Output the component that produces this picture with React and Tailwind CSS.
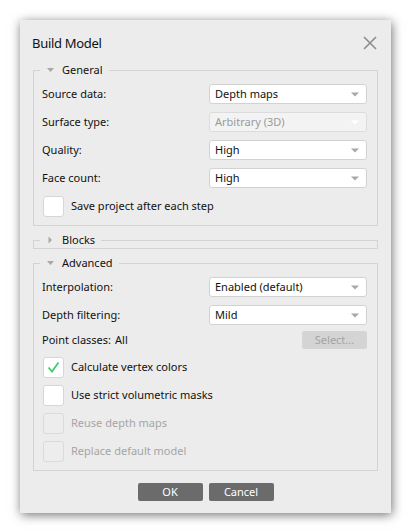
const font = { fontFamily: '"Noto Sans", "Open Sans", sans-serif' }

const Arrow = ({ color = '#a8a8a8' }) => (
    <svg width="8" height="5" viewBox="0 0 8 5" className="shrink-0 mr-[2px]">
        <path d="M0 0.5 H8 L4 4.5 Z" fill={color} />
    </svg>
)

const Combo = ({ value, disabled }) => (
    <div
        className={
            'w-[158px] h-5 flex items-center justify-between pl-[5px] pr-[5px] rounded-[3px] border ' +
            (disabled ? 'bg-[#f3f3f3] border-[#dcdcdc] text-[#9a9a9a]' : 'bg-white border-[#d2d2d2] text-[#111]')
        }
    >
        <span>{value}</span>
        <Arrow color={disabled ? '#ffffff' : '#a8a8a8'} />
    </div>
)

const Row = ({ label, value, disabled }) => (
    <div className="h-5 flex items-center">
        <div className="w-[167px] text-[#111]">{label}</div>
        <Combo value={value} disabled={disabled} />
    </div>
)

const Check = ({ label, checked, disabled }) => (
    <div className="h-5 flex items-center">
        <div
            className={
                'ml-px w-[21px] h-[21px] rounded-[3px] border flex items-center justify-center ' +
                (disabled ? 'bg-[#ededed] border-[#dadada]' : 'bg-white border-[#d6d6d6]')
            }
        >
            {checked && (
                <svg width="13" height="12" viewBox="0 0 13 12">
                    <path d="M1.5 6.5 L5 10.5 L11.5 1.5" fill="none" stroke="#3dcb6c" strokeWidth="1.8" />
                </svg>
            )}
        </div>
        <span className={'ml-[7px] ' + (disabled ? 'text-[#a5a5a5]' : 'text-[#111]')}>{label}</span>
    </div>
)

const Legend = ({ title, open }) => (
    <legend className="ml-[6px] pl-[7px] pr-[6px] h-4 flex items-center gap-[8px] text-[#111]">
        {open ? (
            <svg width="7" height="5" viewBox="0 0 7 5">
                <path d="M0 0 H7 L3.5 4 Z" fill="#a8a8a8" />
            </svg>
        ) : (
            <svg width="7" height="8" viewBox="0 0 7 8">
                <path d="M1.5 0.5 V7.5 L5 4 Z" fill="#a8a8a8" />
            </svg>
        )}
        <span>{title}</span>
    </legend>
)

const App = () => {
    return (
        <div className="w-[410px] h-[532px] bg-white pt-5 pl-5 text-[11px] leading-4" style={font}>
            <div className="w-[371px] h-[493px] bg-[#ececec] shadow-[1px_2px_10px_rgba(0,0,0,0.55)] flex flex-col px-[13px]">
                <div className="h-[42px] flex items-center justify-between pt-[3px]">
                    <span className="text-[13px] tracking-[-0.3px] text-[#111] -ml-px">Build Model</span>
                    <svg width="14" height="14" viewBox="0 0 14 14" className="mr-[1px]">
                        <path d="M1 1 L13 13 M13 1 L1 13" stroke="#8c8c8c" strokeWidth="1.6" />
                    </svg>
                </div>

                <fieldset className="border border-[#d3d3d3]">
                    <Legend title="General" open />
                    <div className="pl-2 pr-[10px] pt-[6px] pb-[9px] flex flex-col gap-2">
                        <Row label="Source data:" value="Depth maps" />
                        <Row label="Surface type:" value="Arbitrary (3D)" disabled />
                        <Row label="Quality:" value="High" />
                        <Row label="Face count:" value="High" />
                        <Check label="Save project after each step" />
                    </div>
                </fieldset>

                <fieldset className="mt-[6px] border border-[#d3d3d3]">
                    <Legend title="Blocks" />
                </fieldset>

                <fieldset className="mt-[6px] border border-[#d3d3d3]">
                    <Legend title="Advanced" open />
                    <div className="pl-2 pr-[10px] pt-[6px] pb-[9px] flex flex-col">
                        <Row label="Interpolation:" value="Enabled (default)" />
                        <div className="mt-2">
                            <Row label="Depth filtering:" value="Mild" />
                        </div>
                        <div className="mt-[6px] h-[18px] flex items-center justify-between">
                            <div className="flex items-center text-[#111]">
                                <span>Point classes:</span>
                                <span className="ml-1">All</span>
                            </div>
                            <div className="w-[65px] h-[18px] bg-[#d4d4d4] rounded-[2px] flex items-center justify-center text-[#a3a3a3]">
                                Select...
                            </div>
                        </div>
                        <div className="mt-2 flex flex-col gap-2">
                            <Check label="Calculate vertex colors" checked />
                            <Check label="Use strict volumetric masks" />
                            <Check label="Reuse depth maps" disabled />
                            <Check label="Replace default model" disabled />
                        </div>
                    </div>
                </fieldset>

                <div className="mt-3 flex justify-center gap-[6px]">
                    <div className="w-[65px] h-[18px] bg-[#6b6b6b] rounded-[2px] flex items-center justify-center text-white">OK</div>
                    <div className="w-[65px] h-[18px] bg-[#6b6b6b] rounded-[2px] flex items-center justify-center text-white">Cancel</div>
                </div>
            </div>
        </div>
    );
}

export default App;
